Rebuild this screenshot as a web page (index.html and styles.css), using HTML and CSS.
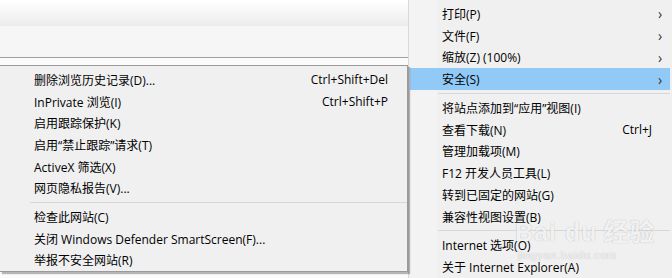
FILE: index.html
```html
<!DOCTYPE html>
<html lang="zh-CN">
<head>
<meta charset="utf-8">
<link rel="stylesheet" href="styles.css">
</head>
<body>
<div class="screen">
  <div class="page">
    <div class="titlebar"></div>
    <div class="toolbar"></div>
    <div class="content"></div>
  </div>
  <div class="menu main">
    <div class="item"><span class="label">打印(P)</span><span class="arrow">›</span></div>
    <div class="item"><span class="label">文件(F)</span><span class="arrow">›</span></div>
    <div class="item"><span class="label">缩放(Z) (100%)</span><span class="arrow">›</span></div>
    <div class="item active"><span class="label">安全(S)</span><span class="arrow">›</span></div>
    <div class="sep"></div>
    <div class="item"><span class="label">将站点添加到“应用”视图(I)</span></div>
    <div class="item"><span class="label">查看下载(N)</span><span class="key">Ctrl+J</span></div>
    <div class="item"><span class="label">管理加载项(M)</span></div>
    <div class="item"><span class="label">F12 开发人员工具(L)</span></div>
    <div class="item"><span class="label">转到已固定的网站(G)</span></div>
    <div class="item"><span class="label">兼容性视图设置(B)</span></div>
    <div class="sep"></div>
    <div class="item"><span class="label">Internet 选项(O)</span></div>
    <div class="item"><span class="label">关于 Internet Explorer(A)</span></div>
  </div>
  <div class="menu sub">
    <div class="item"><span class="label">删除浏览历史记录(D)...</span><span class="key">Ctrl+Shift+Del</span></div>
    <div class="item"><span class="label">InPrivate 浏览(I)</span><span class="key">Ctrl+Shift+P</span></div>
    <div class="item"><span class="label">启用跟踪保护(K)</span></div>
    <div class="item"><span class="label">启用“禁止跟踪”请求(T)</span></div>
    <div class="item"><span class="label">ActiveX 筛选(X)</span></div>
    <div class="item"><span class="label">网页隐私报告(V)...</span></div>
    <div class="sep"></div>
    <div class="item"><span class="label">检查此网站(C)</span></div>
    <div class="item"><span class="label">关闭 Windows Defender SmartScreen(F)...</span></div>
    <div class="item"><span class="label">举报不安全网站(R)</span></div>
  </div>
  <div class="watermark">
    <div class="wm-big">Bai<span class="paw">du</span>经验</div>
    <div class="wm-small">jingyan.baidu.com</div>
  </div>
</div>
</body>
</html>
```
FILE: styles.css
```css
html, body {
  margin: 0;
  padding: 0;
}
body {
  width: 672px;
  height: 278px;
  overflow: hidden;
  font-family: "Open Sans", "Noto Sans CJK SC", sans-serif;
  font-size: 12px;
  color: #000;
  background: #fff;
}
.screen {
  position: relative;
  width: 672px;
  height: 278px;
  display: flex;
}
.page {
  width: 408px;
  display: flex;
  flex-direction: column;
}
.titlebar {
  height: 26px;
  background: linear-gradient(#ffffff, #ececec);
}
.toolbar {
  height: 31px;
  background: #f6f6f6;
  border-bottom: 1px solid #a0a0a0;
}
.content {
  flex: 1;
  background: #fbfbfb;
}
.menu {
  background: #f0f0f0;
  display: flex;
  flex-direction: column;
}
.main {
  flex: 1;
  padding: 3px 2px 0 1px;
  border-left: 1px solid #d9d9d9;
  background: linear-gradient(90deg, #f3f3f3 0, #f3f3f3 28px, #f0f0f0 28px);
}
.item {
  height: 22px;
  display: flex;
  align-items: center;
  padding-left: 32px;
  white-space: nowrap;
}
.label {
  flex: 1;
}
.arrow {
  width: 12px;
  font-size: 14px;
  color: #333;
  text-align: left;
}
.main .key {
  padding-right: 18px;
}
.main .active {
  background: #91c9f7;
}
.sep {
  height: 1px;
  background: #d7d7d7;
  margin: 3px 0 3px 28px;
}
.sub {
  position: absolute;
  left: 0;
  top: 65px;
  width: 408px;
  height: 207px;
  padding-top: 3px;
  box-sizing: border-box;
  border: 1px solid #9a9a9a;
  border-left: none;
  box-shadow: 2px 2px 1px rgba(0,0,0,0.28);
}
.sub .item {
  padding-left: 34px;
}
.sub .key {
  padding-right: 19px;
}
.sub .sep {
  margin-left: 30px;
}
.watermark {
  position: absolute;
  left: 515px;
  top: 218px;
  color: rgba(255,255,255,0.85);
  text-shadow: 0 0 1px rgba(0,0,0,0.3);
  font-family: "Liberation Sans", "Noto Sans CJK SC", sans-serif;
  pointer-events: none;
}
.wm-big {
  font-size: 25px;
  font-weight: bold;
  line-height: 28px;
  letter-spacing: 1px;
}
.paw {
  margin: 0 6px 0 8px;
}
.wm-small {
  font-size: 11px;
  line-height: 12px;
  margin-top: 3px;
  padding-left: 3px;
  letter-spacing: 0.6px;
}
```
